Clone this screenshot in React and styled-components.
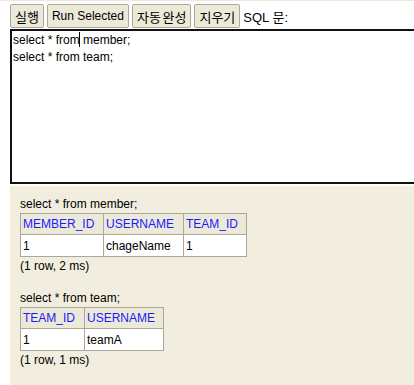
import React from "react";
import styled, { createGlobalStyle } from "styled-components";

const Global = createGlobalStyle`
  html, body { margin: 0; padding: 0; background: #fff; overflow: hidden; }
  body { font-family: "Liberation Sans", Arial, "Noto Sans CJK KR", sans-serif; font-size: 12px; color: #000; }
`;

const Page = styled.div`
  width: 414px;
  height: 385px;
  display: flex;
  flex-direction: column;
  border-top: 1px solid #ece9d8;
  box-sizing: border-box;
`;

const Toolbar = styled.div`
  display: flex;
  align-items: center;
  gap: 3px;
  padding: 3px 0 0 10px;
  height: 24px;
`;

const Button = styled.button`
  height: 24px;
  padding: 0 4px;
  margin: 0;
  background: #ece9d8;
  border: 1px solid #aca899;
  border-radius: 2px;
  font-family: "Liberation Sans", Arial, "Noto Sans CJK KR", sans-serif;
  font-size: ${(p) => (p.ko ? 13 : 12)}px;
  word-spacing: ${(p) => (p.ko ? -2 : 0)}px;
  color: #000;
  white-space: nowrap;
`;

const Label = styled.span`
  font-size: 13px;
  font-family: "Liberation Sans", Arial, "Noto Sans CJK KR", sans-serif;
`;

const Editor = styled.div`
  margin: 1px 0 0 10px;
  width: 420px;
  height: 155px;
  box-sizing: border-box;
  border: 2px solid #111;
  background: #fff;
  padding: 1px 1px;
  line-height: 17px;
  font-size: 12px;
`;

const Caret = styled.span`
  display: inline-block;
  width: 1px;
  height: 15px;
  background: #000;
  vertical-align: -3px;
  margin-left: -1px;
`;

const Result = styled.div`
  flex: 1;
  margin: 2px 0 0 10px;
  background: #f1eedf;
  padding: 10px 10px;
`;

const Query = styled.div`
  line-height: 16px;
  margin-bottom: 1px;
`;

const Table = styled.table`
  border-collapse: collapse;
  font-size: 12px;
`;

const Th = styled.th`
  background: #ece9d8;
  color: #1a1aff;
  font-weight: normal;
  text-align: left;
  border: 1px solid #aca899;
  padding: 0 2px;
  height: 21px;
  min-width: ${(p) => p.w}px;
  box-sizing: border-box;
`;

const Td = styled.td`
  background: #fff;
  border: 1px solid #aca899;
  padding: 0 2px;
  height: 21px;
`;

const Info = styled.div`
  line-height: 16px;
  margin-top: 1px;
`;

const Spacer = styled.div`
  height: 16px;
`;

function ResultBlock({ query, cols, rows, info }) {
  return (
    <>
      <Query>{query}</Query>
      <Table>
        <thead>
          <tr>
            {cols.map((c) => (
              <Th key={c.name} w={c.w}>{c.name}</Th>
            ))}
          </tr>
        </thead>
        <tbody>
          {rows.map((r, i) => (
            <tr key={i}>
              {r.map((v, j) => (
                <Td key={j}>{v}</Td>
              ))}
            </tr>
          ))}
        </tbody>
      </Table>
      <Info>{info}</Info>
    </>
  );
}

export default function App() {
  return (
    <Page>
      <Global />
      <Toolbar>
        <Button ko>실행</Button>
        <Button>Run Selected</Button>
        <Button ko>자동 완성</Button>
        <Button ko>지우기</Button>
        <Label>SQL 문:</Label>
      </Toolbar>
      <Editor>
        select * from<Caret /> member;
        <br />
        select * from team;
      </Editor>
      <Result>
        <ResultBlock
          query="select * from member;"
          cols={[
            { name: "MEMBER_ID", w: 83 },
            { name: "USERNAME", w: 80 },
            { name: "TEAM_ID", w: 63 },
          ]}
          rows={[["1", "chageName", "1"]]}
          info="(1 row, 2 ms)"
        />
        <Spacer />
        <ResultBlock
          query="select * from team;"
          cols={[
            { name: "TEAM_ID", w: 64 },
            { name: "USERNAME", w: 79 },
          ]}
          rows={[["1", "teamA"]]}
          info="(1 row, 1 ms)"
        />
      </Result>
    </Page>
  );
}
